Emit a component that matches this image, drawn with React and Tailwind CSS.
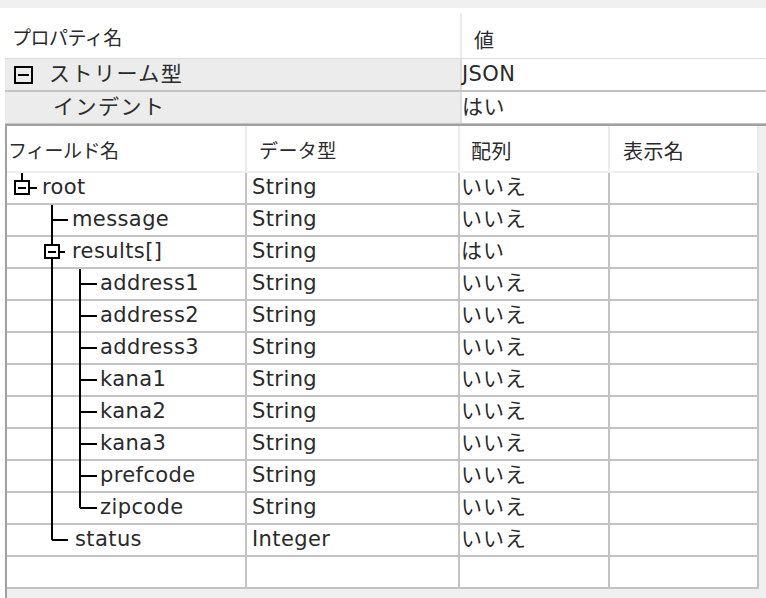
import React from "react";

const font = "font-['DejaVu_Sans','Noto_Sans_CJK_JP',sans-serif]";

const rows = [
  { name: "root", type: "String", arr: "いいえ", tree: "root", x: 35 },
  { name: "message", type: "String", arr: "いいえ", tree: "tee1", x: 65 },
  { name: "results[]", type: "String", arr: "はい", tree: "box1", x: 65 },
  { name: "address1", type: "String", arr: "いいえ", tree: "tee2", x: 93 },
  { name: "address2", type: "String", arr: "いいえ", tree: "tee2", x: 93 },
  { name: "address3", type: "String", arr: "いいえ", tree: "tee2", x: 93 },
  { name: "kana1", type: "String", arr: "いいえ", tree: "tee2", x: 93 },
  { name: "kana2", type: "String", arr: "いいえ", tree: "tee2", x: 93 },
  { name: "kana3", type: "String", arr: "いいえ", tree: "tee2", x: 93 },
  { name: "prefcode", type: "String", arr: "いいえ", tree: "tee2", x: 93 },
  { name: "zipcode", type: "String", arr: "いいえ", tree: "end2", x: 93 },
  { name: "status", type: "Integer", arr: "いいえ", tree: "end1", x: 68 },
  { name: "", type: "", arr: "", tree: null, x: 0 },
];

// tree connector lines drawn per row
const TreeLines = ({ kind }) => {
  if (!kind) return null;
  const s = { stroke: "#000", strokeWidth: 2, fill: "none" };
  return (
    <svg
      width="100"
      height="32"
      className="absolute left-0 top-0"
      shapeRendering="crispEdges"
    >
      {kind === "root" && (
        <g {...s}>
          <line x1="15" y1="0" x2="15" y2="8" />
          <rect x="8" y="8" width="14" height="13" />
          <line x1="11" y1="15" x2="19" y2="15" />
          <line x1="22" y1="15" x2="30" y2="15" />
        </g>
      )}
      {kind === "tee1" && (
        <g {...s}>
          <line x1="45" y1="0" x2="45" y2="32" />
          <line x1="45" y1="15" x2="61" y2="15" />
        </g>
      )}
      {kind === "box1" && (
        <g {...s}>
          <line x1="45" y1="0" x2="45" y2="8" />
          <rect x="38" y="8" width="14" height="13" />
          <line x1="41" y1="15" x2="49" y2="15" />
          <line x1="52" y1="15" x2="58" y2="15" />
          <line x1="45" y1="21" x2="45" y2="32" />
        </g>
      )}
      {kind === "tee2" && (
        <g {...s}>
          <line x1="45" y1="0" x2="45" y2="32" />
          <line x1="73" y1="0" x2="73" y2="32" />
          <line x1="73" y1="15" x2="90" y2="15" />
        </g>
      )}
      {kind === "end2" && (
        <g {...s}>
          <line x1="45" y1="0" x2="45" y2="32" />
          <line x1="73" y1="0" x2="73" y2="15" />
          <line x1="73" y1="15" x2="90" y2="15" />
        </g>
      )}
      {kind === "end1" && (
        <g {...s}>
          <line x1="45" y1="0" x2="45" y2="15" />
          <line x1="45" y1="15" x2="61" y2="15" />
        </g>
      )}
    </svg>
  );
};

const App = () => {
  return (
    <div
      className={`w-[766px] h-[598px] overflow-hidden bg-white text-[21px] tracking-[0.4px] text-[#2a2a2a] ${font}`}
    >
      <div className="h-[8px] bg-[#f0f0f0]" />

      {/* property grid */}
      <div className="pl-[5px]">
        <div className="flex h-[50px]">
          <div className="w-[455px] flex items-center pt-[10px] pl-[7px] text-[19px] tracking-[-0.5px]">
            プロパティ名
          </div>
          <div className="flex-1 flex items-center pt-[10px] pl-[12px] border-l-2 border-[#ebebeb] mt-[5px] text-[20px]">
            値
          </div>
        </div>
        <div className="flex h-[34px] border-t border-b-2 border-[#dcdcdc] border-b-[#c3c3c3]">
          <div className="w-[455px] bg-[#ececec] flex items-center pl-[9px] gap-[16px]">
            <svg width="19" height="18" shapeRendering="crispEdges">
              <rect x="1" y="1" width="17" height="16" fill="none" stroke="#000" strokeWidth="2" />
              <line x1="4" y1="9" x2="15" y2="9" stroke="#000" strokeWidth="2" />
            </svg>
            <span className="tracking-[1.5px]">ストリーム型</span>
          </div>
          <div className="flex-1 flex items-center border-l-2 border-[#dcdcdc] pl-0">
            JSON
          </div>
        </div>
        <div className="flex h-[32px] border-b border-[#c3c3c3]">
          <div className="w-[455px] bg-[#ececec] flex items-center pl-[48px] tracking-[1.5px]">
            インデント
          </div>
          <div className="flex-1 flex items-center border-l-2 border-[#dcdcdc]">
            はい
          </div>
        </div>
      </div>

      {/* field grid */}
      <div className="ml-[5px] border-t-2 border-[#a0a0a0]">
        <div className="flex border-l-2 border-[#a0a0a0]">
          <div className="w-[752px]">
            <div className="flex h-[47px] border-b-2 border-[#f0f0f0]">
              <div className="w-[240px] border-r-2 border-[#ebebeb] flex items-center pt-[6px] pl-[1px] text-[19px] tracking-[-0.5px]">
                フィールド名
              </div>
              <div className="w-[213px] border-r-2 border-[#ebebeb] flex items-center pt-[6px] pl-[12px] text-[19px]">
                データ型
              </div>
              <div className="w-[150px] border-r-2 border-[#ebebeb] flex items-center pt-[6px] pl-[11px] text-[20px]">
                配列
              </div>
              <div className="w-[149px] border-r-2 border-[#ebebeb] flex items-center pt-[6px] pl-[13px] text-[20px]">
                表示名
              </div>
            </div>
            {rows.map((r, i) => (
              <div key={i} className="flex h-[32px] border-b-2 border-[#c3c3c3]">
                <div
                  className="relative w-[240px] border-r-2 border-[#c3c3c3] flex items-center"
                  style={{ paddingLeft: r.x }}
                >
                  <TreeLines kind={r.tree} />
                  <span>{r.name}</span>
                </div>
                <div className="w-[213px] border-r-2 border-[#c3c3c3] flex items-center pl-[5px]">
                  {r.type}
                </div>
                <div className="w-[150px] border-r-2 border-[#c3c3c3] flex items-center pl-[1px] tracking-[1px]">
                  {r.arr}
                </div>
                <div className="w-[149px] border-r-2 border-[#c3c3c3]" />
              </div>
            ))}
            <div className="h-[20px] bg-[#f0f0f0]" />
          </div>
          <div className="flex-1 bg-[#f0f0f0] h-[500px]" />
        </div>
      </div>
    </div>
  );
};

export default App;
